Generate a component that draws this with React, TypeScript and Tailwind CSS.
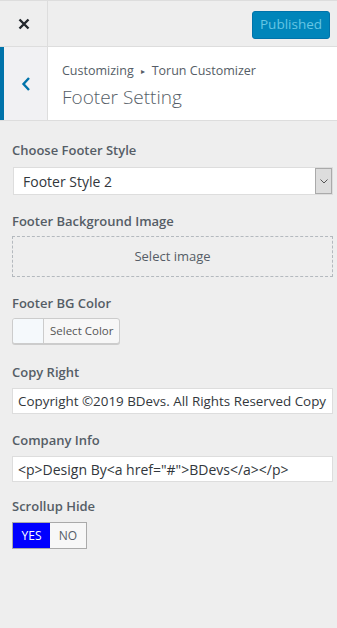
import React from 'react';

const font = { fontFamily: '"Open Sans", "Noto Sans", sans-serif' };

const Label: React.FC<{ children: React.ReactNode }> = ({ children }) => (
  <div className="text-[13px] font-semibold text-[#555d66] leading-[20px]">{children}</div>
);

const App: React.FC = () => {
  return (
    <div className="w-[337px] h-[628px] bg-[#eeeeee] overflow-hidden" style={font}>
      {/* top bar */}
      <div className="flex h-[47px] border-t border-[#dddddd] border-b bg-[#eeeeee]">
        <button className="w-[48px] flex items-center justify-center border-r border-[#dddddd]">
          <svg width="12" height="12" viewBox="0 0 12 12">
            <path d="M1.5 1.5 L10.5 10.5 M10.5 1.5 L1.5 10.5" stroke="#23282d" strokeWidth="2.4" />
          </svg>
        </button>
        <div className="flex-1 flex items-center justify-end pr-[7px] pt-[2px]">
          <div className="h-[28px] w-[78px] rounded-[3px] bg-[#0085ba] border border-[#0073aa] text-[#66c6e4] text-[13.5px] flex items-center justify-center">
            Published
          </div>
        </div>
      </div>

      {/* section header */}
      <div className="flex h-[74px] border-b border-[#dddddd] bg-white">
        <div className="w-[48px] flex items-center justify-center bg-[#f1f1f3] border-l-4 border-[#0073aa] border-r border-r-[#dddddd]">
          <svg width="10" height="16" viewBox="0 0 10 16">
            <path d="M8 2 L2.5 8 L8 14" stroke="#0073aa" strokeWidth="2.4" fill="none" />
          </svg>
        </div>
        <div className="flex-1 pl-[14px] pt-[15px]">
          <div className="text-[12.5px] text-[#555d66] leading-[18px] flex items-center">
            Customizing
            <span className="text-[8px] mx-[7px]">▸</span>
            Torun Customizer
          </div>
          <div className="text-[19px] font-light text-[#555d66] leading-[28px] mt-[3px]">Footer Setting</div>
        </div>
      </div>

      {/* controls */}
      <div className="pl-[12px] pr-[4px] pt-[19px]">
        <Label>Choose Footer Style</Label>
        <div className="mt-[7px] ml-[1px] h-[28px] bg-white border border-[#dddddd] flex items-center relative">
          <span className="pl-[9px] text-[14px] text-[#32373c]">Footer Style 2</span>
          <div className="absolute right-0 top-0 bottom-0 w-[17px] bg-[#dddddd] border border-[#aaaaaa] flex items-center justify-center">
            <svg width="8" height="5" viewBox="0 0 8 5">
              <path d="M0.5 0.5 L4 4 L7.5 0.5" stroke="#555" strokeWidth="1" fill="none" />
            </svg>
          </div>
        </div>

        <div className="mt-[16px]">
          <Label>Footer Background Image</Label>
        </div>
        <div className="mt-[5px] h-[41px] border border-dashed border-[#b4b9be] flex items-center justify-center text-[13px] text-[#555d66]">
          Select image
        </div>

        <div className="mt-[16px]">
          <Label>Footer BG Color</Label>
        </div>
        <div className="mt-[5px] flex">
          <div className="flex h-[26px] border border-[#cccccc] rounded-[3px] bg-[#f7f7f7] shadow-[0_1px_0_#cccccc] overflow-hidden">
            <div className="w-[31px] bg-[#f5f9fc] border-r border-[#cccccc]" />
            <div className="px-[6px] flex items-center text-[11.5px] text-[#555555]">Select Color</div>
          </div>
        </div>

        <div className="mt-[18px]">
          <Label>Copy Right</Label>
        </div>
        <div className="mt-[6px] h-[26px] bg-white border border-[#dddddd] flex items-center overflow-hidden whitespace-nowrap pl-[5px] text-[13.4px] text-[#32373c]">
          Copyright ©2019 BDevs. All Rights Reserved Copy
        </div>

        <div className="mt-[16px]">
          <Label>Company Info</Label>
        </div>
        <div className="mt-[6px] h-[26px] bg-white border border-[#dddddd] flex items-center overflow-hidden whitespace-nowrap pl-[5px] text-[14px] text-[#32373c]">
          {'<p>Design By<a href="#">BDevs</a></p>'}
        </div>

        <div className="mt-[14px]">
          <Label>Scrollup Hide</Label>
        </div>
        <div className="mt-[6px] flex">
          <div className="flex h-[27px] border border-[#aaaaaa] text-[12px]">
            <div className="w-[37px] bg-[#0000ff] text-white flex items-center justify-center">YES</div>
            <div className="w-[36px] bg-[#f7f7f7] text-[#555d66] flex items-center justify-center">NO</div>
          </div>
        </div>
      </div>
    </div>
  );
};

export default App;
